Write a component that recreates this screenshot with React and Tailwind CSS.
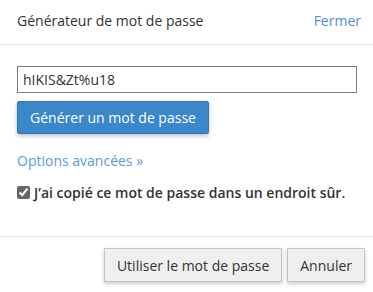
import React, { useState } from "react";

const App = () => {
  const [password, setPassword] = useState("hIKIS&Zt%u18");
  const [copied, setCopied] = useState(true);

  return (
    <div className="w-[373px] h-[292px] bg-white text-[#333] text-[14px] font-['Open_Sans',sans-serif] flex flex-col">
      <div className="h-[45px] border-b border-[#e3e3e3] flex items-center justify-between pl-[17px] pr-[12px] pb-[4px]">
        <h1 className="text-[14px] font-normal">Générateur de mot de passe</h1>
        <a href="#" className="text-[#4f8fd6]">
          Fermer
        </a>
      </div>

      <div className="h-[192px] border-b border-[#e3e3e3] px-[17px] pt-[21px]">
        <input
          type="text"
          value={password}
          onChange={(e) => setPassword(e.target.value)}
          className="w-[340px] h-[27px] border border-[#7a7a7a] px-[5px] text-[14px] text-[#333] outline-none"
        />
        <button className="mt-[8px] h-[33px] w-[192px] bg-[#3a87cc] text-white rounded-[2px] border border-[#2f79bb] shadow-[0_2px_4px_rgba(0,0,0,0.25)]">
          Générer un mot de passe
        </button>
        <div className="mt-[16px]">
          <a href="#" className="text-[#5b9bd9]">
            Options avancées »
          </a>
        </div>
        <label className="mt-[11px] flex items-center gap-[4px] font-semibold">
          <input
            type="checkbox"
            checked={copied}
            onChange={(e) => setCopied(e.target.checked)}
            className="w-[13px] h-[13px] accent-[#666] m-0"
          />
          J’ai copié ce mot de passe dans un endroit sûr.
        </label>
      </div>

      <div className="flex justify-end gap-[5px] pr-[8px] pt-[11px]">
        <button className="h-[34px] px-[12px] bg-[#efefef] border border-[#c4c4c4] shadow-[0_2px_4px_rgba(0,0,0,0.2)] text-[#333]">
          Utiliser le mot de passe
        </button>
        <button className="h-[34px] px-[12px] bg-[#efefef] border border-[#c4c4c4] shadow-[0_2px_4px_rgba(0,0,0,0.2)] text-[#333]">
          Annuler
        </button>
      </div>
    </div>
  );
};

export default App;
